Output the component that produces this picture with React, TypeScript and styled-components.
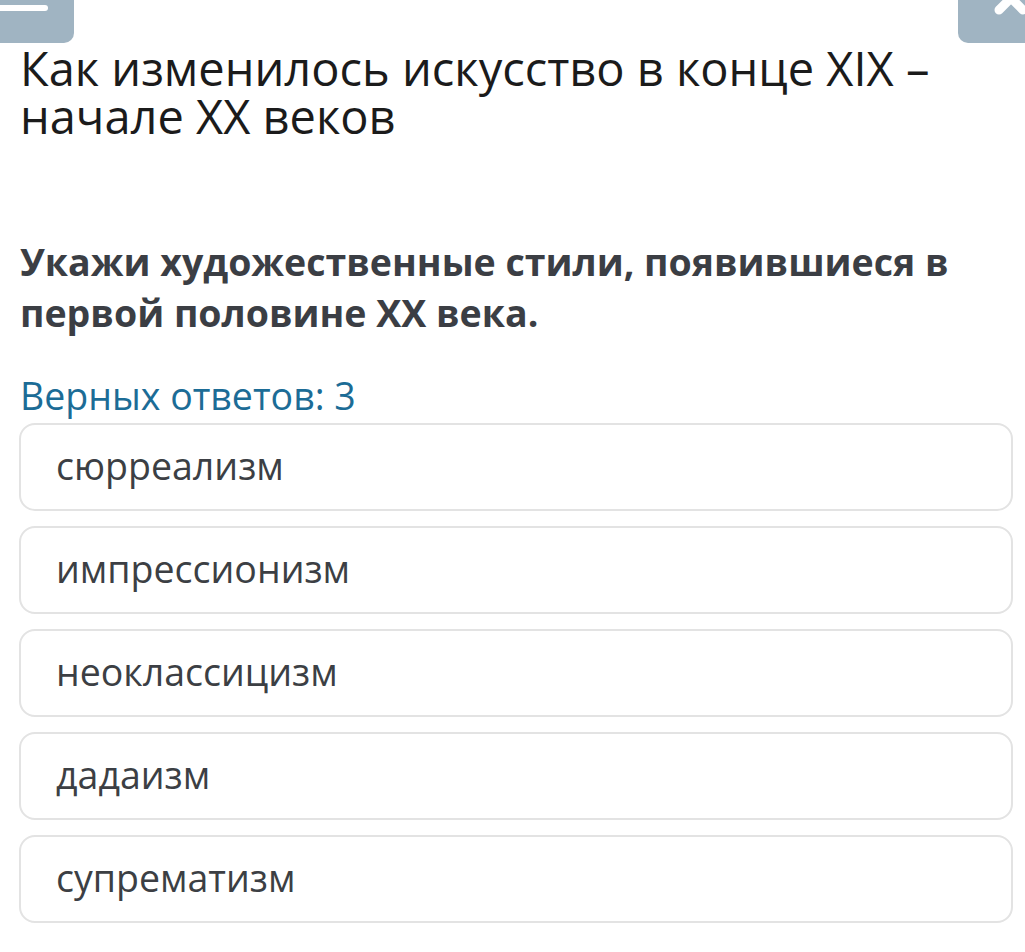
import React from "react";
import styled, { createGlobalStyle } from "styled-components";

const Global = createGlobalStyle`
  html, body { margin: 0; padding: 0; background: #ffffff; }
  body { font-family: "Open Sans", "Noto Sans", sans-serif; width: 1025px; overflow: hidden; }
`;

const Page = styled.div`
  width: 1025px;
  height: 952px;
  display: flex;
  flex-direction: column;
  background: #fff;
`;

const TopBar = styled.div`
  display: flex;
  justify-content: space-between;
  height: 43px;
  flex: none;
`;

const CornerButton = styled.div<{ $side: "left" | "right" }>`
  width: ${(p) => (p.$side === "left" ? "74px" : "67px")};
  height: 43px;
  background: #a0b4c2;
  border-radius: ${(p) => (p.$side === "left" ? "0 0 10px 0" : "0 0 0 10px")};
  overflow: hidden;
  display: flex;
  justify-content: ${(p) => (p.$side === "left" ? "flex-start" : "flex-end")};
  align-items: flex-start;
`;

const MenuLine = styled.div`
  width: 48px;
  height: 6px;
  margin-top: 5px;
  background: #fff;
  border-radius: 0 3px 3px 0;
`;

const CloseIcon = styled.svg`
  width: 40px;
  height: 40px;
  margin-top: -22px;
  margin-right: -6px;
  flex: none;
`;

const Content = styled.div`
  display: flex;
  flex-direction: column;
  padding: 0 12px 0 19px;
`;

const Title = styled.h1`
  margin: 1px 0 0 1px;
  font-weight: 400;
  font-size: 47px;
  line-height: 48px;
  color: #1b1b1b;
`;

const Question = styled.h2`
  margin: 96px 0 0 1px;
  font-weight: 700;
  font-size: 37.5px;
  line-height: 51px;
  color: #3b3e44;
`;

const Hint = styled.div`
  margin: 35px 0 0 1px;
  font-size: 37.5px;
  line-height: 46px;
  color: #1c6c96;
`;

const Options = styled.div`
  display: flex;
  flex-direction: column;
  gap: 15px;
  margin-top: 4px;
`;

const Option = styled.div`
  height: 88px;
  box-sizing: border-box;
  border: 2px solid #e3e3e3;
  border-radius: 16px;
  display: flex;
  align-items: center;
  padding: 0 0 3px 35px;
  font-size: 37.5px;
  color: #3c3f44;
`;

const options = ["сюрреализм", "импрессионизм", "неоклассицизм", "дадаизм", "супрематизм"];

export default function App() {
  return (
    <>
      <Global />
      <Page>
        <TopBar>
          <CornerButton $side="left">
            <MenuLine />
          </CornerButton>
          <CornerButton $side="right">
            <CloseIcon viewBox="0 0 40 40">
              <path d="M8 8 L32 32 M32 8 L8 32" stroke="#fff" strokeWidth="9" strokeLinecap="round" />
            </CloseIcon>
          </CornerButton>
        </TopBar>
        <Content>
          <Title>
            Как изменилось искусство в конце XIX –
            <br />
            начале XX веков
          </Title>
          <Question>
            Укажи художественные стили, появившиеся в
            <br />
            первой половине XX века.
          </Question>
          <Hint>Верных ответов: 3</Hint>
          <Options>
            {options.map((o) => (
              <Option key={o}>{o}</Option>
            ))}
          </Options>
        </Content>
      </Page>
    </>
  );
}
